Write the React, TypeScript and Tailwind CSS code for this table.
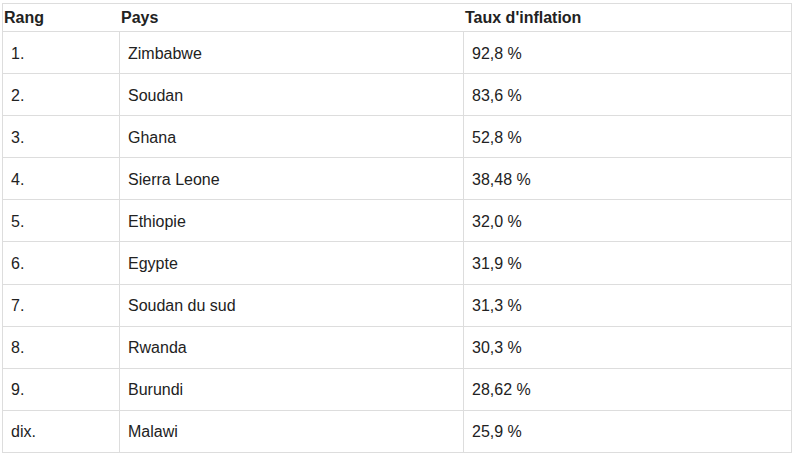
import React from "react";

const rows: [string, string, string][] = [
  ["1.", "Zimbabwe", "92,8 %"],
  ["2.", "Soudan", "83,6 %"],
  ["3.", "Ghana", "52,8 %"],
  ["4.", "Sierra Leone", "38,48 %"],
  ["5.", "Ethiopie", "32,0 %"],
  ["6.", "Egypte", "31,9 %"],
  ["7.", "Soudan du sud", "31,3 %"],
  ["8.", "Rwanda", "30,3 %"],
  ["9.", "Burundi", "28,62 %"],
  ["dix.", "Malawi", "25,9 %"],
];

export default function App() {
  return (
    <div
      className="w-[797px] h-[456px] bg-white pt-[3px] pl-[2px] text-[16px] text-[#222222] overflow-hidden"
      style={{ fontFamily: '"Liberation Sans", Arial, Helvetica, sans-serif' }}
    >
      <div className="w-[790px] border-l border-r border-t border-[#dddddd]">
        <div className="grid grid-cols-[117px_344px_327px] h-[28px] border-b border-[#dddddd] font-bold items-center">
          <div className="pl-[1px]">Rang</div>
          <div className="pl-[1px]">Pays</div>
          <div className="pl-[1px]">Taux d'inflation</div>
        </div>
        {rows.map((r, i) => (
          <div
            key={i}
            className="grid grid-cols-[117px_344px_327px] h-[42.1px] border-b border-[#dddddd]"
          >
            <div className="flex items-center pl-2 pt-[2px] border-r border-[#dddddd]">{r[0]}</div>
            <div className="flex items-center pl-2 pt-[2px] border-r border-[#dddddd]">{r[1]}</div>
            <div className="flex items-center pl-2 pt-[2px]">{r[2]}</div>
          </div>
        ))}
      </div>
    </div>
  );
}
